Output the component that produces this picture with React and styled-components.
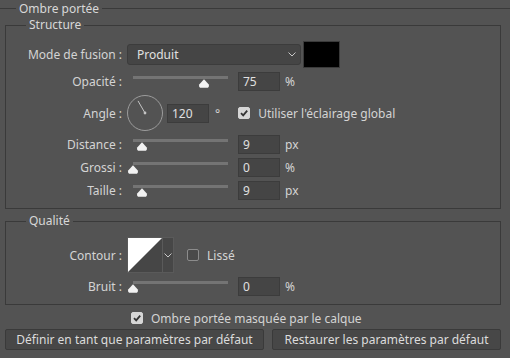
import React from 'react';
import styled, { createGlobalStyle } from 'styled-components';

const Global = createGlobalStyle`
  html, body { margin: 0; padding: 0; background: #535353; }
  body { font-family: "Noto Sans", "Open Sans", sans-serif; font-size: 12px; color: #d4d4d4; }
`

const Panel = styled.div`
  width: 510px;
  height: 358px;
  overflow: hidden;
  background: #535353;
`

const Outer = styled.fieldset`
  margin: 0;
  padding: 1px 0 0 5px;
  width: 520px;
  min-width: 0;
  border: none;
  border-top: 1px solid #3a3a3a;
  box-sizing: border-box;
`

const Legend = styled.legend`
  margin-left: ${p => p.$offset}px;
  padding: 0 3px;
  line-height: ${p => p.$lh ?? 14}px;
  color: #d8d8d8;
`

const Group = styled.fieldset`
  margin: ${p => p.$top}px 0 0 0;
  padding: 8px 0 6px 0;
  width: 496px;
  min-width: 0;
  box-sizing: border-box;
  border: 1px solid #3a3a3a;
`

const Row = styled.div`
  display: flex;
  align-items: center;
  height: ${p => p.$h}px;
`

const Label = styled.div`
  width: 116px;
  margin-right: 5px;
  text-align: right;
  white-space: nowrap;
`

const Select = styled.div`
  display: flex;
  align-items: center;
  justify-content: space-between;
  width: 174px;
  height: 21px;
  box-sizing: border-box;
  padding: 0 4px 0 9px;
  background: #454545;
  border: 1px solid #3c3c3c;
  border-radius: 3px;
  color: #e0e0e0;
`

const Swatch = styled.div`
  width: 37px;
  height: 27px;
  margin-left: 2px;
  box-sizing: border-box;
  background: ${p => p.$color};
  border: 1px solid #3a3a3a;
`

const SliderWrap = styled.div`
  position: relative;
  width: 106px;
  height: 14px;
`

const Track = styled.div`
  margin: 2px 5px 0 6px;
  height: 3px;
  background: #747474;
`

const Thumb = styled.svg`
  position: absolute;
  top: 5px;
`

const NumBox = styled.div`
  width: 42px;
  height: 19px;
  margin-left: ${p => p.$ml ?? 5}px;
  box-sizing: border-box;
  padding-left: 4px;
  line-height: 17px;
  background: #454545;
  border: 1px solid #3c3c3c;
  color: #e0e0e0;
`

const Unit = styled.span`
  margin-left: ${p => p.$ml ?? 5}px;
`

const Box = styled.div`
  display: flex;
  align-items: center;
  justify-content: center;
  width: 12px;
  height: 12px;
  box-sizing: border-box;
  border-radius: 2px;
  margin-left: ${p => p.$ml ?? 0}px;
  margin-right: 8px;
  background: ${p => (p.$on ? '#d6d6d6' : '#4a4a4a')};
  border: 1px solid ${p => (p.$on ? '#d6d6d6' : '#8c8c8c')};
`

const Contour = styled.div`
  display: flex;
  width: 47px;
  height: 36px;
  box-sizing: border-box;
  border: 1px solid #5a5a5a;
  background: #474747;
`

const CurveView = styled.svg`
  display: block;
  border-right: 1px solid #5a5a5a;
`

const CurveArrow = styled.div`
  flex: 1;
  display: flex;
  align-items: center;
  justify-content: center;
`

const Masque = styled.div`
  display: flex;
  align-items: center;
  height: 20px;
  margin: 3px 0 0 126px;
`

const Buttons = styled.div`
  display: flex;
  gap: 8px;
  margin-top: 1px;
`

const Button = styled.button`
  width: ${p => p.$w}px;
  height: 21px;
  padding: 0;
  font: inherit;
  color: #dcdcdc;
  background: #474747;
  border: 1px solid #3a3a3a;
  border-radius: 2px;
`

function Chevron() {
  return (
    <svg width="8" height="5" viewBox="0 0 8 5">
      <path d="M0.5 0.5 L4 4 L7.5 0.5" fill="none" stroke="#c8c8c8" strokeWidth="1" />
    </svg>
  );
}

function Check({ on, ml }) {
  return (
    <Box $on={on} $ml={ml}>
      {on && (
        <svg width="10" height="10" viewBox="0 0 10 10">
          <path d="M2 5.2 L4.2 7.4 L8.2 2.6" fill="none" stroke="#333" strokeWidth="1.8" />
        </svg>
      )}
    </Box>
  );
}

function Slider({ pct }) {
  const left = 6 + pct * 95 - 6;
  return (
    <SliderWrap>
      <Track />
      <Thumb width="12" height="9" viewBox="0 0 12 9" style={{ left }}>
        <path d="M6 0.3 L10.8 5.4 Q11.6 8.8 8.6 8.8 L3.4 8.8 Q0.4 8.8 1.2 5.4 Z" fill="#f2f2f2" />
      </Thumb>
    </SliderWrap>
  );
}

function SliderRow({ label, pct, value, unit, h }) {
  return (
    <Row $h={h}>
      <Label>{label}</Label>
      <Slider pct={pct} />
      <NumBox>{value}</NumBox>
      <Unit>{unit}</Unit>
    </Row>
  );
}

function Dial({ angle }) {
  const r = (angle * Math.PI) / 180;
  const x = 18 + Math.cos(r) * 14;
  const y = 18 - Math.sin(r) * 14;
  return (
    <svg width="36" height="36" viewBox="0 0 36 36">
      <circle cx="18" cy="18" r="17.5" fill="none" stroke="#9c9c9c" strokeWidth="1" />
      <line x1="18" y1="18" x2={x} y2={y} stroke="#c4c4c4" strokeWidth="1" />
      <circle cx="18" cy="18" r="1.4" fill="#c4c4c4" />
    </svg>
  );
}

export default function App() {
  return (
    <Panel>
      <Global />
      <Outer>
        <Legend $offset={11} $lh={17}>Ombre portée</Legend>

        <Group $top={0}>
          <Legend $offset={20}>Structure</Legend>
          <Row $h={28}>
            <Label>Mode de fusion :</Label>
            <Select>
              <span>Produit</span>
              <Chevron />
            </Select>
            <Swatch $color="#000" />
          </Row>
          <SliderRow h={26} label="Opacité :" pct={0.75} value="75" unit="%" />
          <Row $h={38}>
            <Label>Angle :</Label>
            <Dial angle={120} />
            <NumBox $ml={4}>120</NumBox>
            <Unit $ml={6}>°</Unit>
            <Check on ml={18} />
            <span>Utiliser l'éclairage global</span>
          </Row>
          <SliderRow h={24} label="Distance :" pct={0.09} value="9" unit="px" />
          <SliderRow h={22} label="Grossi :" pct={0} value="0" unit="%" />
          <SliderRow h={24} label="Taille :" pct={0.09} value="9" unit="px" />
        </Group>

        <Group $top={5}>
          <Legend $offset={20}>Qualité</Legend>
          <Row $h={38}>
            <Label>Contour :</Label>
            <Contour>
              <CurveView width="34" height="34" viewBox="0 0 34 34">
                <rect width="34" height="34" fill="#464646" />
                <path d="M0 0 L34 0 L0 34 Z" fill="#ffffff" />
              </CurveView>
              <CurveArrow>
                <Chevron />
              </CurveArrow>
            </Contour>
            <Check on={false} ml={13} />
            <span>Lissé</span>
          </Row>
          <SliderRow h={24} label="Bruit :" pct={0} value="0" unit="%" />
        </Group>

        <Masque>
          <Check on />
          <span>Ombre portée masquée par le calque</span>
        </Masque>

        <Buttons>
          <Button $w={259}>Définir en tant que paramètres par défaut</Button>
          <Button $w={229}>Restaurer les paramètres par défaut</Button>
        </Buttons>
      </Outer>
    </Panel>
  );
}
